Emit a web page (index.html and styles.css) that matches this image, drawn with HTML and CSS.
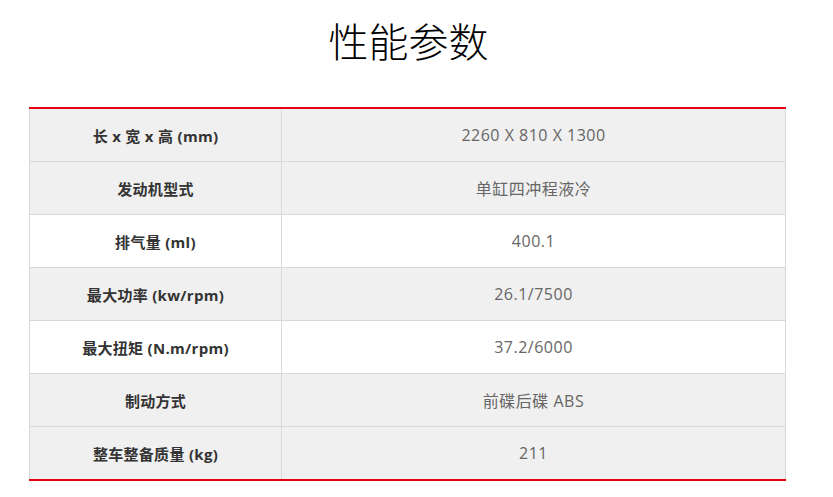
FILE: index.html
```html
<!DOCTYPE html>
<html lang="zh-CN">
<head>
<meta charset="utf-8">
<title>性能参数</title>
<link rel="stylesheet" href="styles.css">
</head>
<body>
<div class="page">
  <h1 class="title">性能参数</h1>
  <table class="spec">
    <tbody>
      <tr class="grey"><th>长 x 宽 x 高 (mm)</th><td>2260 X 810 X 1300</td></tr>
      <tr class="grey"><th>发动机型式</th><td>单缸四冲程液冷</td></tr>
      <tr><th>排气量 (ml)</th><td>400.1</td></tr>
      <tr class="grey"><th>最大功率 (kw/rpm)</th><td>26.1/7500</td></tr>
      <tr><th>最大扭矩 (N.m/rpm)</th><td>37.2/6000</td></tr>
      <tr class="grey"><th>制动方式</th><td>前碟后碟 ABS</td></tr>
      <tr class="grey"><th>整车整备质量 (kg)</th><td>211</td></tr>
    </tbody>
  </table>
</div>
</body>
</html>
```

FILE: styles.css
```css
html, body {
  margin: 0;
  padding: 0;
  background: #fff;
}
.page {
  padding: 10px 0 0 29px;
  width: 757px;
}
.title {
  margin: 0 0 37px 0;
  text-align: center;
  font-family: "Noto Sans CJK SC", "Noto Sans", sans-serif;
  font-weight: 300;
  font-size: 40px;
  line-height: 60px;
  color: #000;
  padding-left: 2px;
}
.spec {
  width: 757px;
  border-collapse: collapse;
  border-top: 2px solid #e60012;
  border-bottom: 2px solid #e60012;
  font-family: "Open Sans", "Noto Sans CJK SC", sans-serif;
}
.spec th, .spec td {
  height: 52px;
  padding: 0;
  border-left: 1px solid #d9d9d9;
  border-right: 1px solid #d9d9d9;
  border-bottom: 1px solid #d9d9d9;
  text-align: center;
  vertical-align: middle;
}
.spec tr:last-child th, .spec tr:last-child td {
  border-bottom: none;
}
.spec th {
  width: 251px;
  font-size: 15px;
  font-weight: 700;
  letter-spacing: 0.3px;
  color: #333;
}
.spec td {
  font-size: 16px;
  font-weight: 400;
  letter-spacing: 0.5px;
  color: #666;
}
.spec tr.grey {
  background: #f0f0f0;
}
```
